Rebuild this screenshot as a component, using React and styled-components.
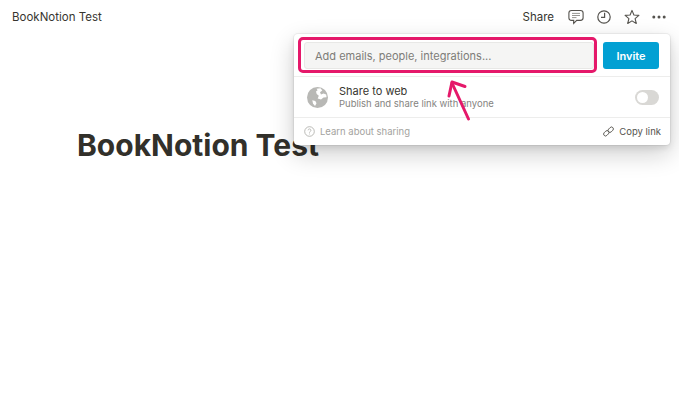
import React from "react";
import styled, { createGlobalStyle } from "styled-components";

const Global = createGlobalStyle`
  html, body { margin: 0; padding: 0; background: #fff; }
  body { font-family: Inter, "Liberation Sans", sans-serif; color: #37352f; overflow: hidden; }
`;

const Page = styled.div`
  position: relative;
  width: 679px;
  height: 419px;
  overflow: hidden;
`;

const Topbar = styled.header`
  display: flex;
  align-items: center;
  justify-content: space-between;
  height: 33px;
  padding: 0 12px;
  font-size: 11.5px;
`;

const Actions = styled.div`
  display: flex;
  align-items: center;
`;

const ShareLabel = styled.span`
  margin-right: 14px;
`;

const IconSlot = styled.span`
  display: flex;
  width: 16px;
  height: 16px;
  margin-left: ${({ $gap }) => $gap || 0}px;
`;

const Title = styled.h1`
  margin: 92px 0 0 77px;
  font-size: 30px;
  line-height: 40px;
  font-weight: 700;
  color: #32302a;
`;

const Menu = styled.div`
  position: absolute;
  left: 294px;
  top: 34px;
  width: 376px;
  height: 111px;
  box-sizing: border-box;
  background: #fff;
  border-radius: 4px;
  box-shadow: 0 0 0 1px rgba(15, 15, 15, 0.05), 0 3px 6px rgba(15, 15, 15, 0.1), 0 9px 24px rgba(15, 15, 15, 0.2);
  display: flex;
  flex-direction: column;
`;

const InviteRow = styled.div`
  display: flex;
  gap: 9px;
  height: 43px;
  box-sizing: border-box;
  padding: 8px 11px 7px 10px;
  border-bottom: 1px solid #ededec;
`;

const EmailInput = styled.div`
  flex: 1;
  display: flex;
  align-items: center;
  padding-left: 10px;
  background: #f5f5f4;
  border: 1px solid #e8e8e6;
  border-radius: 3px;
  font-size: 11px;
  color: #7d7c78;
`;

const InviteButton = styled.button`
  width: 56px;
  border: 0;
  padding: 0;
  border-radius: 3px;
  background: #02a0d3;
  color: #fff;
  font: 600 11px Inter, "Liberation Sans", sans-serif;
`;

const WebRow = styled.div`
  display: flex;
  align-items: center;
  height: 41px;
  box-sizing: border-box;
  padding: 0 11px 0 13px;
  border-bottom: 1px solid #ededec;
`;

const WebText = styled.div`
  flex: 1;
  margin-left: 11px;
`;

const WebTitle = styled.div`
  font-size: 11px;
  line-height: 14px;
`;

const WebHint = styled.div`
  font-size: 9.5px;
  line-height: 12px;
  color: #85847f;
`;

const Toggle = styled.div`
  width: 24px;
  height: 15px;
  box-sizing: border-box;
  padding: 2px;
  border-radius: 8px;
  background: #d9d8d5;

  &::before {
    content: "";
    display: block;
    width: 11px;
    height: 11px;
    border-radius: 50%;
    background: #fff;
  }
`;

const Footer = styled.div`
  flex: 1;
  display: flex;
  align-items: center;
  justify-content: space-between;
  padding: 0 9px 1px 10px;
  font-size: 9.5px;
`;

const FooterItem = styled.span`
  display: flex;
  align-items: center;
  gap: ${({ $gap }) => $gap}px;
  color: ${({ $muted }) => ($muted ? "#a3a29e" : "#55534e")};
`;

const Highlight = styled.div`
  position: absolute;
  left: 298px;
  top: 37px;
  width: 299px;
  height: 36px;
  box-sizing: border-box;
  border: 3px solid #e5186a;
  border-radius: 5px;
`;

const ArrowLayer = styled.svg`
  position: absolute;
  left: 440px;
  top: 76px;
`;

const CommentIcon = () => (
  <svg width="16" height="16" viewBox="0 0 16 16" fill="none" stroke="#55534e" strokeWidth="1.1">
    <path d="M3.500 1.500h9a2.600 2.600 0 0 1 2.600 2.600v4.700a2.600 2.600 0 0 1-2.600 2.600H8.700L5.700 14.500v-3.100H3.500A2.600 2.600 0 0 1 .9 8.800V4.100a2.600 2.600 0 0 1 2.600-2.600z" />
    <path d="M4 4.400h8M4 6.500h8M4 8.600h4.500" strokeWidth="0.9" stroke="#8a8985" />
  </svg>
);

const ClockIcon = () => (
  <svg width="16" height="16" viewBox="0 0 16 16" fill="none" stroke="#55534e" strokeWidth="1.2">
    <circle cx="8" cy="8" r="6.2" />
    <path d="M8.600 3.800v4.600H5" />
  </svg>
);

const StarIcon = () => (
  <svg width="16" height="16" viewBox="0 0 16 16" fill="none" stroke="#55534e" strokeWidth="1.1" strokeLinejoin="round">
    <path d="M8 1.400l1.900 4.600 5 .4-3.800 3.200 1.200 4.900L8 11.900l-4.300 2.600 1.200-4.900L1.100 6.400l5-.4z" />
  </svg>
);

const MoreIcon = () => (
  <svg width="16" height="16" viewBox="0 0 16 16" fill="#55534e">
    <circle cx="2.800" cy="8" r="1.500" />
    <circle cx="8" cy="8" r="1.500" />
    <circle cx="13.200" cy="8" r="1.500" />
  </svg>
);

const GlobeIcon = () => (
  <svg width="21" height="21" viewBox="0 0 21 21">
    <circle cx="10.500" cy="10.500" r="10.500" fill="#b8b8b5" />
    <path d="M9.500 1.800l4-.6 1.800 2.200-2.300 1.900 1 2.300 2.500-1.200 2.700 1.200.4 2.600-3.100.4-2.500 2-3.300-1.200 1.100-2.600-2.100-1.800-.7-2.400 1.600-1.400z" fill="#fff" />
    <path d="M5.300 13.300l3 .7 1.200 2.300-1.500 2.700-2-2.400z" fill="#fff" />
  </svg>
);

const HelpIcon = () => (
  <svg width="11" height="11" viewBox="0 0 11 11" fill="none" stroke="#aaa9a5" strokeWidth="0.8">
    <circle cx="5.500" cy="5.500" r="4.800" />
    <path d="M4.100 4.300a1.400 1.400 0 1 1 2.200 1.200c-.5.300-.8.600-.8 1.100" />
    <path d="M5.500 7.600v.8" />
  </svg>
);

const LinkIcon = () => (
  <svg width="11" height="11" viewBox="0 0 11 11" fill="none" stroke="#55534e" strokeWidth="0.9">
    <rect x="4.700" y="1.800" width="6" height="3.800" rx="1.900" transform="rotate(-45 7.700 3.700)" />
    <rect x="0.300" y="5.400" width="6" height="3.800" rx="1.900" transform="rotate(-45 3.300 7.300)" />
  </svg>
);

export default function App() {
  return (
    <Page>
      <Global />
      <Topbar>
        <span>BookNotion Test</span>
        <Actions>
          <ShareLabel>Share</ShareLabel>
          <IconSlot><CommentIcon /></IconSlot>
          <IconSlot $gap={12}><ClockIcon /></IconSlot>
          <IconSlot $gap={12}><StarIcon /></IconSlot>
          <IconSlot $gap={11}><MoreIcon /></IconSlot>
        </Actions>
      </Topbar>
      <Title>BookNotion Test</Title>
      <Menu>
        <InviteRow>
          <EmailInput>Add emails, people, integrations...</EmailInput>
          <InviteButton>Invite</InviteButton>
        </InviteRow>
        <WebRow>
          <GlobeIcon />
          <WebText>
            <WebTitle>Share to web</WebTitle>
            <WebHint>Publish and share link with anyone</WebHint>
          </WebText>
          <Toggle />
        </WebRow>
        <Footer>
          <FooterItem $muted $gap={5}><HelpIcon />Learn about sharing</FooterItem>
          <FooterItem $gap={5}><LinkIcon />Copy link</FooterItem>
        </Footer>
      </Menu>
      <Highlight />
      <ArrowLayer width="40" height="48" viewBox="0 0 40 48" fill="none" stroke="#e5186a" strokeWidth="3" strokeLinecap="round" strokeLinejoin="round">
        <path d="M28.500 43L12 7" />
        <path d="M9 20L12 6l13 4.500" />
      </ArrowLayer>
    </Page>
  );
}
